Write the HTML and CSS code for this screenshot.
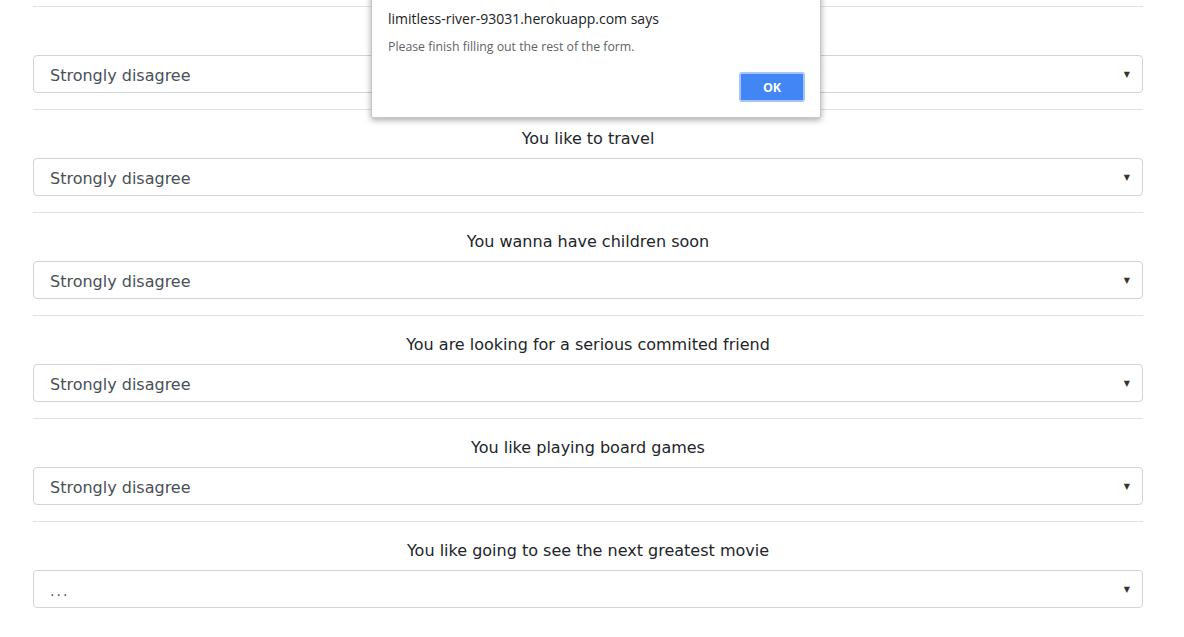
FILE: index.html
```html
<!DOCTYPE html>
<html>
<head>
<meta charset="utf-8">
<link rel="stylesheet" href="styles.css">
</head>
<body>
<div class="container">
  <div class="row">
    <hr class="sep">
    <label class="q">You have a pet</label>
    <div class="select"><span>Strongly disagree</span><span class="caret">▼</span></div>
  </div>
  <div class="row">
    <hr class="sep">
    <label class="q">You like to travel</label>
    <div class="select"><span>Strongly disagree</span><span class="caret">▼</span></div>
  </div>
  <div class="row">
    <hr class="sep">
    <label class="q">You wanna have children soon</label>
    <div class="select"><span>Strongly disagree</span><span class="caret">▼</span></div>
  </div>
  <div class="row">
    <hr class="sep">
    <label class="q">You are looking for a serious commited friend</label>
    <div class="select"><span>Strongly disagree</span><span class="caret">▼</span></div>
  </div>
  <div class="row">
    <hr class="sep">
    <label class="q">You like playing board games</label>
    <div class="select"><span>Strongly disagree</span><span class="caret">▼</span></div>
  </div>
  <div class="row">
    <hr class="sep">
    <label class="q">You like going to see the next greatest movie</label>
    <div class="select"><span class="dots">...</span><span class="caret">▼</span></div>
  </div>
</div>
<div class="dialog">
  <div class="dlg-title">limitless-river-93031.herokuapp.com says</div>
  <div class="dlg-msg">Please finish filling out the rest of the form.</div>
  <div class="dlg-actions"><button class="ok">OK</button></div>
</div>
</body>
</html>
```
FILE: styles.css
```css
html, body { margin: 0; padding: 0; background: #fff; }
body { font-family: "DejaVu Sans", Verdana, sans-serif; color: #212529; overflow: hidden; height: 637px; }
.container { width: 1110px; margin-left: 33px; padding-top: 6px; }
.row { display: flex; flex-direction: column; }
.sep { margin: 0; border: 0; border-top: 1px solid #e0e0e0; height: 0; }
.q { display: block; text-align: center; font-size: 16px; line-height: 24px; margin-top: 17px; margin-bottom: 7px; color: #212529; }
.select { border: 1px solid #ced4da; border-radius: 4px; display: flex; align-items: center; justify-content: space-between; padding: 3px 12px 0 16px; box-sizing: content-box; height: 33px; font-size: 16px; color: #495057; margin-bottom: 16px; }
.dots { letter-spacing: 2px; font-size: 14px; }
.caret { font-size: 8px; color: #333; margin-top: -3px; }
.dialog { position: absolute; left: 371px; top: -10px; width: 450px; height: 128px; background: #fff; border: 1px solid #c8c8c8; box-shadow: 0 2px 6px rgba(0,0,0,0.35); border-radius: 2px; font-family: "Open Sans", "Noto Sans", sans-serif; box-sizing: border-box; padding: 19px 15px 0 16px; }
.dlg-title { font-size: 14px; color: #202124; line-height: 18px; }
.dlg-msg { font-size: 12.3px; color: #5f6368; margin-top: 11px; line-height: 16px; }
.dlg-actions { display: flex; justify-content: flex-end; margin-top: 17px; }
.ok { width: 66px; height: 30px; background: #4285f4; border: 2px solid #a6c4f8; border-radius: 3px; color: #fff; font-family: inherit; font-weight: 700; font-size: 12.5px; padding: 0; }
```
